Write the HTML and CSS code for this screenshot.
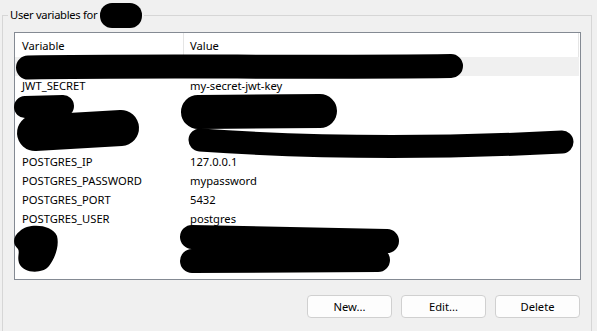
FILE: index.html
```html
<!DOCTYPE html>
<html>
<head>
<meta charset="utf-8">
<link rel="stylesheet" href="styles.css">
</head>
<body>
<div class="page">
<section class="group">
  <h2 class="group-title">User variables for <span class="name-slot"></span></h2>
  <div class="list">
    <div class="list-header">
      <div class="cell cell-var">Variable</div>
      <div class="cell cell-val">Value</div>
    </div>
    <div class="row row-hover"><div class="cell cell-var"></div><div class="cell cell-val"></div></div>
    <div class="row"><div class="cell cell-var">JWT_SECRET</div><div class="cell cell-val">my-secret-jwt-key</div></div>
    <div class="row"><div class="cell cell-var"></div><div class="cell cell-val"></div></div>
    <div class="row"><div class="cell cell-var"></div><div class="cell cell-val"></div></div>
    <div class="row"><div class="cell cell-var"></div><div class="cell cell-val"></div></div>
    <div class="row"><div class="cell cell-var">POSTGRES_IP</div><div class="cell cell-val">127.0.0.1</div></div>
    <div class="row"><div class="cell cell-var">POSTGRES_PASSWORD</div><div class="cell cell-val">mypassword</div></div>
    <div class="row"><div class="cell cell-var">POSTGRES_PORT</div><div class="cell cell-val">5432</div></div>
    <div class="row"><div class="cell cell-var">POSTGRES_USER</div><div class="cell cell-val">postgres</div></div>
    <div class="row"><div class="cell cell-var"></div><div class="cell cell-val"></div></div>
    <div class="row"><div class="cell cell-var"></div><div class="cell cell-val"></div></div>
  </div>
  <div class="buttons">
    <button class="btn">New...</button>
    <button class="btn">Edit...</button>
    <button class="btn">Delete</button>
  </div>
</section>
</div>
<svg class="redact" width="597" height="331" viewBox="0 0 597 331">
  <g fill="#000" stroke="#000" stroke-linecap="round" stroke-linejoin="round">
    <rect x="100" y="3" width="42" height="25" rx="12" stroke="none"/>
    <path d="M28 67.5 C150 65 300 68 451 66" stroke-width="24" fill="none"/>
    <path d="M25 107 L63 106" stroke-width="22" fill="none"/>
    <path d="M35 133 L121 128" stroke-width="36" fill="none"/>
    <path d="M198 112 L320 111" stroke-width="34" fill="none"/>
    <path d="M200 140 Q370 152 562 142" stroke-width="23" fill="none"/>
    <path d="M20 231 C28 223 52 224 57 236 C60 248 53 261 49 266 C43 274 23 274 19 263 C17 256 20 253 18 249 C12 244 13 236 20 231 Z" stroke="none"/>
    <path d="M192 237 L387 241" stroke-width="24" fill="none"/>
    <path d="M192 261 L378 260" stroke-width="24" fill="none"/>
  </g>
</svg>
</body>
</html>
```
FILE: styles.css
```css
html, body {
  margin: 0;
  padding: 0;
  height: 331px;
  overflow: hidden;
  background: #f0f0f0;
  font-family: "Noto Sans", "Segoe UI", sans-serif;
  font-size: 11.2px;
  color: #000;
}

.page {
  padding: 15px 5px 0 2px;
}

.group {
  position: relative;
  box-sizing: border-box;
  height: 316px;
  padding: 16px 11px 0;
  border-top: 1px solid #d6d6d6;
  border-left: 1px solid #d6d6d6;
  border-right: 1px solid #d6d6d6;
}

.group-title {
  position: absolute;
  top: -9px;
  left: 5px;
  margin: 0;
  padding: 0 2px;
  background: #f0f0f0;
  font-size: 11.2px;
  font-weight: normal;
  letter-spacing: -0.3px;
  line-height: 16px;
  white-space: nowrap;
}

.name-slot {
  display: inline-block;
  width: 42px;
  height: 1px;
}

.list {
  box-sizing: border-box;
  width: 567px;
  height: 248px;
  background: #fff;
  border: 1px solid #848a93;
}

.list-header {
  display: flex;
  height: 24px;
  width: 564px;
  box-sizing: border-box;
  border-right: 1px solid #e5e5e5;
}

.list-header .cell {
  line-height: 25px;
}

.list-header .cell-var {
  border-right: 1px solid #e5e5e5;
}

.row {
  display: flex;
  height: 19px;
  width: 564px;
}

.row-hover {
  background: #f0f0f0;
}

.cell {
  line-height: 20px;
  white-space: nowrap;
  overflow: hidden;
}

.cell-var {
  box-sizing: border-box;
  width: 169px;
  padding-left: 7px;
}

.cell-val {
  flex: 1;
  padding-left: 6px;
}

.buttons {
  display: flex;
  justify-content: flex-end;
  gap: 9px;
  width: 566px;
  margin-top: 15px;
}

.btn {
  box-sizing: border-box;
  width: 85px;
  height: 23px;
  padding: 0;
  background: #fdfdfd;
  border: 1px solid #d0d0d0;
  border-radius: 4px;
  font-family: inherit;
  font-size: 11.2px;
  color: #000;
}

.redact {
  position: absolute;
  left: 0;
  top: 0;
  pointer-events: none;
}
```
